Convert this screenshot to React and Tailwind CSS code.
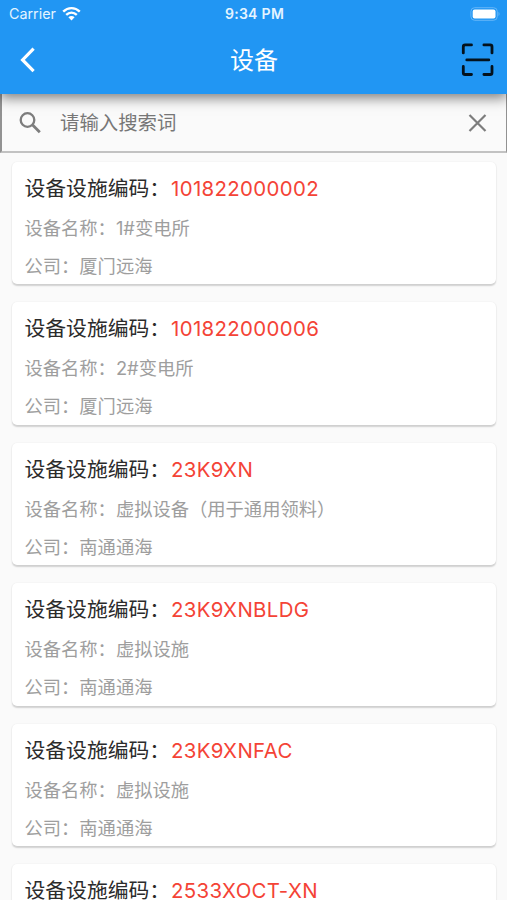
import { useState } from "react";

const devices = [
  { code: "101822000002", name: "1#变电所", company: "厦门远海" },
  { code: "101822000006", name: "2#变电所", company: "厦门远海" },
  { code: "23K9XN", name: "虚拟设备（用于通用领料）", company: "南通通海" },
  { code: "23K9XNBLDG", name: "虚拟设施", company: "南通通海" },
  { code: "23K9XNFAC", name: "虚拟设施", company: "南通通海" },
  { code: "2533XOCT-XN" },
];

function StatusBar() {
  return (
    <div className="grid grid-cols-3 items-center h-7 pl-[9px] pr-[6px] text-[#e4f4ff]">
      <div className="flex items-center gap-[6px]">
        <span className="text-[14.3px] leading-7">Carrier</span>
        <svg width="19" height="15" viewBox="0 0 19 15" fill="none" stroke="white" strokeWidth="2.4" className="relative -top-px">
          <path d="M1.2 5.6 C6 0.9 13 0.9 17.8 5.6" />
          <path d="M4.2 8.9 C7.3 6 11.7 6 14.8 8.9" />
          <path d="M9.5 14.4 L6.4 11.3 C8.2 9.7 10.8 9.7 12.6 11.3 Z" fill="white" stroke="none" />
        </svg>
      </div>
      <span className="text-center text-[14px] leading-7 font-semibold tracking-[0.3px] -ml-px">9:34 PM</span>
      <svg className="justify-self-end" width="31" height="14" viewBox="0 0 31 14">
        <rect x="0.9" y="0.7" width="26.4" height="12.6" rx="3.8" fill="none" stroke="#64b6f8" strokeWidth="1" />
        <rect x="2.7" y="2.4" width="22.8" height="9.2" rx="2" fill="white" />
        <path d="M28.5 4.8 Q30.6 7 28.5 9.2 Z" fill="#64b6f8" />
      </svg>
    </div>
  );
}

function AppBar() {
  return (
    <header className="relative z-10 h-[94px] bg-[#2196f3] shadow-[0_4px_12px_rgba(0,0,0,0.5)]">
      <StatusBar />
      <div className="grid grid-cols-3 items-center h-16 pl-5 pr-[13px]">
        <svg width="16" height="26" viewBox="0 0 16 26" fill="none" stroke="white" strokeWidth="3.2">
          <path d="M13.6 1.7 L2.6 12.9 L13.6 24.1" />
        </svg>
        <h1 className="-ml-[6px] pt-px text-center text-[24px] leading-8 text-white">设备</h1>
        <svg className="justify-self-end" width="33" height="34" viewBox="0 0 33 34" fill="none" stroke="#04121d" strokeWidth="2.8" strokeLinecap="round" strokeLinejoin="round">
          <path d="M2.3 9.9 V3.7 Q2.3 1.9 4.1 1.9 H10.5" />
          <path d="M22.9 1.9 H29.2 Q31 1.9 31 3.7 V9.9" />
          <path d="M2.3 23.5 V29.7 Q2.3 31.5 4.1 31.5 H10.5" />
          <path d="M22.9 31.5 H29.2 Q31 31.5 31 29.7 V23.5" />
          <path d="M5.8 16.9 H27.8" />
        </svg>
      </div>
    </header>
  );
}

function SearchBar() {
  const [keyword, setKeyword] = useState("");

  return (
    <div className="flex items-center h-[59px] pl-[17px] pr-[19px] border-l-2 border-r border-b-2 border-l-[#929292] border-r-[#929292] border-b-[#c2c2c2]">
      <svg width="24" height="24" viewBox="0 0 24 24" fill="none" stroke="#7d7d7d" strokeWidth="2.3">
        <circle cx="8.5" cy="9" r="6.8" />
        <path d="M13.4 13.8 L20.8 21.2" strokeWidth="2.8" />
      </svg>
      <input
        value={keyword}
        onChange={(e) => setKeyword(e.target.value)}
        placeholder="请输入搜索词"
        className="flex-1 min-w-0 ml-[17px] text-[19.4px] leading-7 text-[#333333] outline-none placeholder:text-[#777777] placeholder:opacity-100"
      />
      <svg width="20" height="20" viewBox="0 0 20 20" fill="none" stroke="#7d7d7d" strokeWidth="2.2" onClick={() => setKeyword("")}>
        <path d="M2.5 2 L18.5 18 M18.5 2 L2.5 18" />
      </svg>
    </div>
  );
}

function DeviceCard({ device }) {
  return (
    <div className="shrink-0 h-[122.5px] pl-[12.5px] pt-[11px] rounded-[5px] bg-white shadow-[0_1.5px_1.5px_rgba(0,0,0,0.16),0_0_2px_rgba(0,0,0,0.05)]">
      <p className="flex text-[20.8px] leading-8 text-[#2b2b2b]">
        <span className="w-[146.5px] whitespace-nowrap">设备设施编码：</span>
        <span className="text-[20.4px] tracking-[0.36px] text-[#f44336]">{device.code}</span>
      </p>
      {device.name && (
        <>
          <p className="mt-2 text-[18.3px] leading-[30px] text-[#9e9e9e]">设备名称：{device.name}</p>
          <p className="mt-2 text-[18.3px] leading-[30px] text-[#9e9e9e]">公司：{device.company}</p>
        </>
      )}
    </div>
  );
}

export default function App() {
  return (
    <div className="flex flex-col h-[900px] overflow-hidden bg-[#fafafa] font-['Inter','Noto_Sans_CJK_SC',sans-serif]">
      <AppBar />
      <SearchBar />
      <main className="flex flex-col flex-1 min-h-0 overflow-hidden gap-[18px] pl-3 pr-[11px] pt-[8.5px]">
        {devices.map((device) => (
          <DeviceCard key={device.code} device={device} />
        ))}
      </main>
    </div>
  );
}
